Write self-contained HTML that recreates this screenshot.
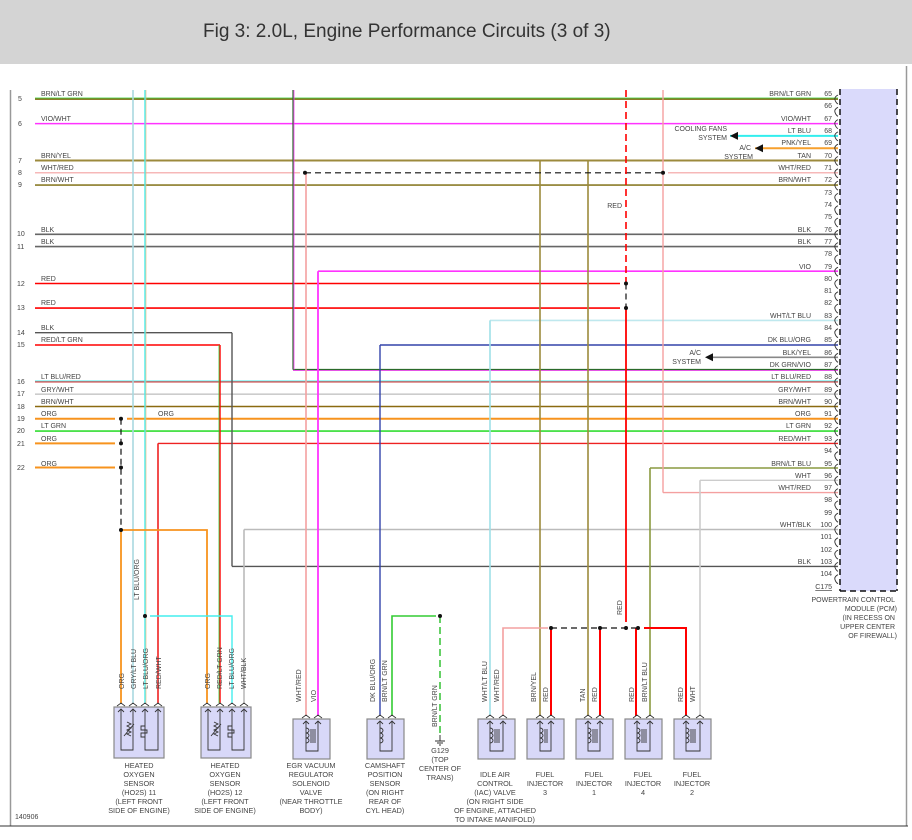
<!DOCTYPE html>
<html><head><meta charset="utf-8"><style>
html,body{margin:0;padding:0;background:#fff;width:912px;height:840px;overflow:hidden}
svg{display:block}
text{font-family:"Liberation Sans",sans-serif;font-size:7px;fill:#444}
.t{font-size:19px;fill:#333}
.c{text-anchor:middle;font-size:7.3px}
.r{text-anchor:end}
</style></head><body>
<svg width="912" height="840" viewBox="0 0 912 840" xmlns="http://www.w3.org/2000/svg">
<rect x="0" y="0" width="912" height="64" fill="#d4d4d4"/>
<text x="203" y="37" class="t">Fig 3: 2.0L, Engine Performance Circuits (3 of 3)</text>
<!-- frame -->
<line x1="10.5" y1="90" x2="10.5" y2="826" stroke="#999" stroke-width="1.5"/>
<line x1="906.5" y1="66" x2="906.5" y2="826" stroke="#999" stroke-width="1.5"/>
<line x1="0" y1="826" x2="908" y2="826" stroke="#333" stroke-width="1"/>
<text x="15" y="819" style="font-size:7px">140906</text>
<!-- PCM -->
<rect x="840" y="89" width="57" height="502" fill="#dadafb"/>
<g stroke="#111" stroke-width="1.5" stroke-dasharray="6 4" fill="none">
<line x1="840" y1="89" x2="840" y2="591"/><line x1="897" y1="89" x2="897" y2="591"/><line x1="840" y1="591" x2="897" y2="591"/>
</g>
<g fill="none" stroke-width="1.2">
<!-- horizontal wires -->
<line x1="35" y1="99" x2="838" y2="99" stroke="#8b7d2a" stroke-width="2"/><line x1="35" y1="98" x2="838" y2="98" stroke="#3c3" stroke-width="0.8"/>
<line x1="35" y1="123.6" x2="838" y2="123.6" stroke="#f3f" stroke-width="1.5"/>
<line x1="730" y1="135.9" x2="838" y2="135.9" stroke="#3ee" stroke-width="2"/>
<line x1="755" y1="148.2" x2="838" y2="148.2" stroke="#f7a02e" stroke-width="2"/>
<line x1="35" y1="160.5" x2="838" y2="160.5" stroke="#9c8a3c" stroke-width="2"/>
<line x1="35" y1="172.8" x2="300" y2="172.8" stroke="#f4a0a0" stroke-width="1.2"/>
<line x1="668" y1="172.8" x2="838" y2="172.8" stroke="#f4a0a0" stroke-width="1.2"/>
<line x1="35" y1="185.1" x2="838" y2="185.1" stroke="#8b7d2a" stroke-width="1.6"/>
<line x1="35" y1="234.3" x2="838" y2="234.3" stroke="#666" stroke-width="1.6"/>
<line x1="35" y1="246.6" x2="838" y2="246.6" stroke="#666" stroke-width="1.6"/>
<line x1="318" y1="271.2" x2="838" y2="271.2" stroke="#f3f" stroke-width="1.6"/>
<line x1="35" y1="283.5" x2="620" y2="283.5" stroke="#f00" stroke-width="1.6"/>
<line x1="35" y1="308.1" x2="620" y2="308.1" stroke="#f00" stroke-width="1.6"/>
<line x1="490" y1="320.4" x2="838" y2="320.4" stroke="#bfe8ee" stroke-width="1.6"/>
<line x1="35" y1="332.7" x2="232" y2="332.7" stroke="#555" stroke-width="1.4"/>
<line x1="35" y1="345" x2="220" y2="345" stroke="#f00" stroke-width="1.4"/>
<line x1="380" y1="345" x2="838" y2="345" stroke="#3344aa" stroke-width="1.4"/>
<line x1="708" y1="357.3" x2="838" y2="357.3" stroke="#888" stroke-width="1.6"/>
<line x1="293" y1="369.6" x2="838" y2="369.6" stroke="#2a6a2a" stroke-width="1.4"/><line x1="293" y1="370.6" x2="838" y2="370.6" stroke="#f3f" stroke-width="0.8"/>
<line x1="35" y1="381.9" x2="838" y2="381.9" stroke="#c33" stroke-width="1.2"/><line x1="35" y1="380.9" x2="838" y2="380.9" stroke="#4ee" stroke-width="0.8"/>
<line x1="35" y1="394.2" x2="838" y2="394.2" stroke="#ccc" stroke-width="1.6"/>
<line x1="35" y1="406.5" x2="838" y2="406.5" stroke="#8b6a10" stroke-width="1.4"/>
<line x1="35" y1="418.8" x2="115" y2="418.8" stroke="#f7931e" stroke-width="2"/>
<line x1="127" y1="418.8" x2="838" y2="418.8" stroke="#f7931e" stroke-width="2"/>
<line x1="35" y1="431.1" x2="838" y2="431.1" stroke="#3d3" stroke-width="1.6"/>
<line x1="35" y1="443.4" x2="115" y2="443.4" stroke="#f7931e" stroke-width="2"/>
<line x1="158" y1="443.4" x2="838" y2="443.4" stroke="#e22" stroke-width="1.4"/>
<line x1="35" y1="467.5" x2="115" y2="467.5" stroke="#f7931e" stroke-width="2"/>
<line x1="650" y1="468" x2="838" y2="468" stroke="#8a9a40" stroke-width="1.4"/>
<line x1="700" y1="480.3" x2="838" y2="480.3" stroke="#ccc" stroke-width="1.4"/>
<line x1="663" y1="492.6" x2="838" y2="492.6" stroke="#f4a0a0" stroke-width="1.4"/>
<line x1="244" y1="529.5" x2="838" y2="529.5" stroke="#bbb" stroke-width="1.4"/>
<line x1="232" y1="566.4" x2="838" y2="566.4" stroke="#555" stroke-width="1.4"/>
<!-- verticals -->
<line x1="133" y1="90" x2="133" y2="703" stroke="#a8d8e0" stroke-width="1.6"/>
<line x1="145" y1="90" x2="145" y2="703" stroke="#4ee" stroke-width="1.4"/><line x1="146" y1="90" x2="146" y2="703" stroke="#f7b070" stroke-width="0.6"/>
<line x1="293" y1="90" x2="293" y2="369.6" stroke="#2a6a2a" stroke-width="1.2"/><line x1="294" y1="90" x2="294" y2="369.6" stroke="#f3f" stroke-width="0.8"/>
<line x1="306" y1="172.8" x2="306" y2="716" stroke="#f4a0a0" stroke-width="1.6"/>
<line x1="318" y1="271.2" x2="318" y2="716" stroke="#f3f" stroke-width="1.8"/>
<line x1="663" y1="90" x2="663" y2="492.6" stroke="#f4a0a0" stroke-width="1.4"/>
<line x1="540" y1="160.5" x2="540" y2="716" stroke="#9c8a3c" stroke-width="1.6"/>
<line x1="588" y1="160.5" x2="588" y2="716" stroke="#9c8a3c" stroke-width="1.6"/>
<line x1="490" y1="320.4" x2="490" y2="716" stroke="#9fe0e8" stroke-width="1.6"/>
<line x1="380" y1="345" x2="380" y2="716" stroke="#3344aa" stroke-width="1.4"/>
<line x1="232" y1="332.7" x2="232" y2="566.4" stroke="#555" stroke-width="1.4"/>
<line x1="220" y1="345" x2="220" y2="703" stroke="#f00" stroke-width="1.4"/><line x1="219" y1="345" x2="219" y2="703" stroke="#3c3" stroke-width="0.8"/>
<line x1="158" y1="443.4" x2="158" y2="703" stroke="#e22" stroke-width="1.6"/>
<line x1="244" y1="529.5" x2="244" y2="703" stroke="#bbb" stroke-width="1.6"/>
<line x1="650" y1="468" x2="650" y2="716" stroke="#8a9a40" stroke-width="1.6"/>
<line x1="700" y1="480.3" x2="700" y2="716" stroke="#ccc" stroke-width="1.6"/>
<polyline points="121,530 207,530 207,703" stroke="#f7931e" stroke-width="1.8"/>
<line x1="121" y1="530" x2="121" y2="703" stroke="#f7931e" stroke-width="1.8"/>
<polyline points="150,616 232,616 232,703" stroke="#4ee" stroke-width="1.4"/>
<polyline points="436,616 392,616 392,716" stroke="#3c3" stroke-width="1.6"/>
<polyline points="548,628 503,628 503,716" stroke="#f4a0a0" stroke-width="1.6"/>
<line x1="551" y1="628" x2="551" y2="716" stroke="#f00" stroke-width="2"/>
<line x1="600" y1="628" x2="600" y2="716" stroke="#f00" stroke-width="2"/>
<line x1="636" y1="628" x2="636" y2="716" stroke="#f00" stroke-width="2"/>
<polyline points="644,628 686,628 686,716" stroke="#f00" stroke-width="2"/>
<line x1="626" y1="308" x2="626" y2="622" stroke="#f00" stroke-width="1.8"/>
</g>
<!-- dashed -->
<g fill="none" stroke="#111" stroke-width="1.2" stroke-dasharray="6 4">
<line x1="121" y1="418.8" x2="121" y2="530"/>
<line x1="305" y1="172.8" x2="663" y2="172.8"/>
<line x1="626" y1="283.5" x2="626" y2="308"/>
<line x1="551" y1="628" x2="636" y2="628"/>
</g>
<line x1="626" y1="90" x2="626" y2="283" stroke="#f00" stroke-width="1.6" stroke-dasharray="7 4"/>
<line x1="440" y1="616" x2="440" y2="735" stroke="#5c5" stroke-width="1.8" stroke-dasharray="7 4"/>
<g fill="#111">
<circle cx="121" cy="418.8" r="2"/><circle cx="121" cy="443.4" r="2"/><circle cx="121" cy="467.5" r="2"/><circle cx="121" cy="530" r="2"/>
<circle cx="145" cy="616" r="2"/><circle cx="440" cy="616" r="2"/>
<circle cx="305" cy="172.8" r="2"/><circle cx="663" cy="172.8" r="2"/>
<circle cx="626" cy="283.5" r="2"/><circle cx="626" cy="308" r="2"/>
<circle cx="551" cy="628" r="2"/><circle cx="600" cy="628" r="2"/><circle cx="626" cy="628" r="2"/><circle cx="638" cy="628" r="2"/>
<path d="M730 135.9 l8 -4 v8z"/><path d="M755 148.2 l8 -4 v8z"/><path d="M705 357.3 l8 -4 v8z"/>
</g>
<!-- ground -->
<g stroke="#333" stroke-width="1"><line x1="440" y1="735" x2="440" y2="741"/><line x1="435" y1="741" x2="445" y2="741"/><line x1="437" y1="743" x2="443" y2="743"/><line x1="439" y1="745" x2="441" y2="745"/></g>
<!-- pin connectors -->
<g fill="none" stroke="#333" stroke-width="0.9" id="pins">
<path d="M838 95 q-4 2 -3 5 q1 3 3 4 M838 107.3 q-4 2 -3 5 q1 3 3 4 M838 119.6 q-4 2 -3 5 q1 3 3 4 M838 131.9 q-4 2 -3 5 q1 3 3 4 M838 144.2 q-4 2 -3 5 q1 3 3 4 M838 156.5 q-4 2 -3 5 q1 3 3 4 M838 168.8 q-4 2 -3 5 q1 3 3 4 M838 181.1 q-4 2 -3 5 q1 3 3 4 M838 193.4 q-4 2 -3 5 q1 3 3 4 M838 205.7 q-4 2 -3 5 q1 3 3 4 M838 218 q-4 2 -3 5 q1 3 3 4 M838 230.3 q-4 2 -3 5 q1 3 3 4 M838 242.6 q-4 2 -3 5 q1 3 3 4 M838 254.9 q-4 2 -3 5 q1 3 3 4 M838 267.2 q-4 2 -3 5 q1 3 3 4 M838 279.5 q-4 2 -3 5 q1 3 3 4 M838 291.8 q-4 2 -3 5 q1 3 3 4 M838 304.1 q-4 2 -3 5 q1 3 3 4 M838 316.4 q-4 2 -3 5 q1 3 3 4 M838 328.7 q-4 2 -3 5 q1 3 3 4 M838 341 q-4 2 -3 5 q1 3 3 4 M838 353.3 q-4 2 -3 5 q1 3 3 4 M838 365.6 q-4 2 -3 5 q1 3 3 4 M838 377.9 q-4 2 -3 5 q1 3 3 4 M838 390.2 q-4 2 -3 5 q1 3 3 4 M838 402.5 q-4 2 -3 5 q1 3 3 4 M838 414.8 q-4 2 -3 5 q1 3 3 4 M838 427.1 q-4 2 -3 5 q1 3 3 4 M838 439.4 q-4 2 -3 5 q1 3 3 4 M838 451.7 q-4 2 -3 5 q1 3 3 4 M838 464 q-4 2 -3 5 q1 3 3 4 M838 476.3 q-4 2 -3 5 q1 3 3 4 M838 488.6 q-4 2 -3 5 q1 3 3 4 M838 500.9 q-4 2 -3 5 q1 3 3 4 M838 513.2 q-4 2 -3 5 q1 3 3 4 M838 525.5 q-4 2 -3 5 q1 3 3 4 M838 537.8 q-4 2 -3 5 q1 3 3 4 M838 550.1 q-4 2 -3 5 q1 3 3 4 M838 562.4 q-4 2 -3 5 q1 3 3 4 M838 574.7 q-4 2 -3 5 q1 3 3 4"/>
</g>
<!-- left numbers and labels -->
<g>
<text x="18" y="101">5</text><text x="18" y="126">6</text><text x="18" y="163">7</text><text x="18" y="175">8</text><text x="18" y="187">9</text>
<text x="17" y="236">10</text><text x="17" y="249">11</text><text x="17" y="286">12</text><text x="17" y="310">13</text><text x="17" y="335">14</text><text x="17" y="347">15</text>
<text x="17" y="384">16</text><text x="17" y="396">17</text><text x="17" y="409">18</text><text x="17" y="421">19</text><text x="17" y="433">20</text><text x="17" y="446">21</text><text x="17" y="470">22</text>
<text x="41" y="96">BRN/LT GRN</text><text x="41" y="121">VIO/WHT</text><text x="41" y="158">BRN/YEL</text><text x="41" y="170">WHT/RED</text><text x="41" y="182">BRN/WHT</text>
<text x="41" y="232">BLK</text><text x="41" y="244">BLK</text><text x="41" y="281">RED</text><text x="41" y="305">RED</text><text x="41" y="330">BLK</text><text x="41" y="342">RED/LT GRN</text>
<text x="41" y="379">LT BLU/RED</text><text x="41" y="392">GRY/WHT</text><text x="41" y="404">BRN/WHT</text><text x="41" y="416">ORG</text><text x="158" y="416">ORG</text><text x="41" y="428">LT GRN</text><text x="41" y="441">ORG</text><text x="41" y="466">ORG</text>
</g>
<!-- right labels -->
<g class="r">
<text class="r" x="811" y="96">BRN/LT GRN</text><text class="r" x="811" y="121">VIO/WHT</text><text class="r" x="811" y="133">LT BLU</text><text class="r" x="811" y="145">PNK/YEL</text><text class="r" x="811" y="158">TAN</text><text class="r" x="811" y="170">WHT/RED</text><text class="r" x="811" y="182">BRN/WHT</text>
<text class="r" x="811" y="232">BLK</text><text class="r" x="811" y="244">BLK</text><text class="r" x="811" y="269">VIO</text><text class="r" x="811" y="318">WHT/LT BLU</text><text class="r" x="811" y="342">DK BLU/ORG</text><text class="r" x="811" y="355">BLK/YEL</text><text class="r" x="811" y="367">DK GRN/VIO</text><text class="r" x="811" y="379">LT BLU/RED</text><text class="r" x="811" y="392">GRY/WHT</text><text class="r" x="811" y="404">BRN/WHT</text><text class="r" x="811" y="416">ORG</text><text class="r" x="811" y="428">LT GRN</text><text class="r" x="811" y="441">RED/WHT</text><text class="r" x="811" y="466">BRN/LT BLU</text><text class="r" x="811" y="478">WHT</text><text class="r" x="811" y="490">WHT/RED</text><text class="r" x="811" y="527">WHT/BLK</text><text class="r" x="811" y="564">BLK</text>
<text class="r" x="832" y="96">65</text><text class="r" x="832" y="108">66</text><text class="r" x="832" y="121">67</text><text class="r" x="832" y="133">68</text><text class="r" x="832" y="145">69</text><text class="r" x="832" y="158">70</text><text class="r" x="832" y="170">71</text><text class="r" x="832" y="182">72</text><text class="r" x="832" y="195">73</text><text class="r" x="832" y="207">74</text><text class="r" x="832" y="219">75</text><text class="r" x="832" y="232">76</text><text class="r" x="832" y="244">77</text><text class="r" x="832" y="256">78</text><text class="r" x="832" y="269">79</text><text class="r" x="832" y="281">80</text><text class="r" x="832" y="293">81</text><text class="r" x="832" y="305">82</text><text class="r" x="832" y="318">83</text><text class="r" x="832" y="330">84</text><text class="r" x="832" y="342">85</text><text class="r" x="832" y="355">86</text><text class="r" x="832" y="367">87</text><text class="r" x="832" y="379">88</text><text class="r" x="832" y="392">89</text><text class="r" x="832" y="404">90</text><text class="r" x="832" y="416">91</text><text class="r" x="832" y="428">92</text><text class="r" x="832" y="441">93</text><text class="r" x="832" y="453">94</text><text class="r" x="832" y="466">95</text><text class="r" x="832" y="478">96</text><text class="r" x="832" y="490">97</text><text class="r" x="832" y="502">98</text><text class="r" x="832" y="515">99</text><text class="r" x="832" y="527">100</text><text class="r" x="832" y="539">101</text><text class="r" x="832" y="552">102</text><text class="r" x="832" y="564">103</text><text class="r" x="832" y="576">104</text>
<text class="r" x="832" y="589" style="text-decoration:underline">C175</text>
<text class="r" x="727" y="131">COOLING FANS</text><text class="r" x="727" y="140">SYSTEM</text>
<text class="r" x="751" y="150">A/C</text><text class="r" x="753" y="159">SYSTEM</text>
<text class="r" x="701" y="355">A/C</text><text class="r" x="701" y="364">SYSTEM</text>
<text class="r" x="622" y="208">RED</text>
<text class="r" x="895" y="602">POWERTRAIN CONTROL</text><text class="r" x="897" y="611">MODULE (PCM)</text><text class="r" x="895" y="620">(IN RECESS ON</text><text class="r" x="895" y="629">UPPER CENTER</text><text class="r" x="897" y="638">OF FIREWALL)</text>
</g>
<!-- rotated labels -->
<g>
<text transform="translate(124,689) rotate(-90)">ORG</text>
<text transform="translate(136,689) rotate(-90)">GRY/LT BLU</text>
<text transform="translate(148,689) rotate(-90)">LT BLU/ORG</text>
<text transform="translate(161,689) rotate(-90)">RED/WHT</text>
<text transform="translate(139,600) rotate(-90)">LT BLU/ORG</text>
<text transform="translate(210,689) rotate(-90)">ORG</text>
<text transform="translate(222,689) rotate(-90)">RED/LT GRN</text>
<text transform="translate(234,689) rotate(-90)">LT BLU/ORG</text>
<text transform="translate(246,689) rotate(-90)">WHT/BLK</text>
<text transform="translate(301,702) rotate(-90)">WHT/RED</text>
<text transform="translate(316,702) rotate(-90)">VIO</text>
<text transform="translate(375,702) rotate(-90)">DK BLU/ORG</text>
<text transform="translate(387,702) rotate(-90)">BRN/LT GRN</text>
<text transform="translate(437,727) rotate(-90)">BRN/LT GRN</text>
<text transform="translate(487,702) rotate(-90)">WHT/LT BLU</text>
<text transform="translate(499,702) rotate(-90)">WHT/RED</text>
<text transform="translate(536,702) rotate(-90)">BRN/YEL</text>
<text transform="translate(548,702) rotate(-90)">RED</text>
<text transform="translate(585,702) rotate(-90)">TAN</text>
<text transform="translate(597,702) rotate(-90)">RED</text>
<text transform="translate(634,702) rotate(-90)">RED</text>
<text transform="translate(647,702) rotate(-90)">BRN/LT BLU</text>
<text transform="translate(683,702) rotate(-90)">RED</text>
<text transform="translate(695,702) rotate(-90)">WHT</text>
<text transform="translate(622,615) rotate(-90)">RED</text>
</g>
<!-- components -->
<g fill="#d8d8f8" stroke="#888" stroke-width="1.2">
<rect x="114" y="707" width="50" height="51"/><rect x="201" y="707" width="50" height="51"/>
<rect x="293" y="719" width="37" height="40"/><rect x="367" y="719" width="37" height="40"/>
<rect x="478" y="719" width="37" height="40"/><rect x="527" y="719" width="37" height="40"/><rect x="576" y="719" width="37" height="40"/><rect x="625" y="719" width="37" height="40"/><rect x="674" y="719" width="37" height="40"/>
</g>
<g fill="none" stroke="#333" stroke-width="0.9">
<!-- caret pins -->
<path d="M117 706 l4 -3 l4 3 M129 706 l4 -3 l4 3 M141 706 l4 -3 l4 3 M154 706 l4 -3 l4 3"/>
<path d="M203 706 l4 -3 l4 3 M216 706 l4 -3 l4 3 M228 706 l4 -3 l4 3 M240 706 l4 -3 l4 3"/>
<path d="M302 718 l4 -3 l4 3 M314 718 l4 -3 l4 3 M376 718 l4 -3 l4 3 M388 718 l4 -3 l4 3 M486 718 l4 -3 l4 3 M499 718 l4 -3 l4 3 M536 718 l4 -3 l4 3 M547 718 l4 -3 l4 3 M584 718 l4 -3 l4 3 M596 718 l4 -3 l4 3 M633 718 l4 -3 l4 3 M646 718 l4 -3 l4 3 M682 718 l4 -3 l4 3 M696 718 l4 -3 l4 3"/>
<!-- HO2S internals -->
<path d="M121 709 v41 h12 v-41 M145 709 v41 h13 v-41 M118 712 l3 -3 l3 3 M130 712 l3 -3 l3 3 M142 712 l3 -3 l3 3 M155 712 l3 -3 l3 3"/>
<path d="M127 722 l4 2 l-4 2 l4 2 l-4 2 l4 2 l-4 2 l4 2 M124 736 l10 -12 M145 726 h-4 v4 h6 v3 h-6 v4 h4"/>
<path d="M208 709 v41 h12 v-41 M232 709 v41 h12 v-41 M205 712 l3 -3 l3 3 M217 712 l3 -3 l3 3 M229 712 l3 -3 l3 3 M241 712 l3 -3 l3 3"/>
<path d="M214 722 l4 2 l-4 2 l4 2 l-4 2 l4 2 l-4 2 l4 2 M211 736 l10 -12 M232 726 h-4 v4 h6 v3 h-6 v4 h4"/>
<!-- solenoid coils -->
<path d="M306 721 v30 h12 v-30 M303 724 l3 -3 l3 3 M315 724 l3 -3 l3 3 M306 728 a3 2.5 0 0 1 0 5 a3 2.5 0 0 1 0 5 a3 2.5 0 0 1 0 5 M311 729 v14 M313 729 v14 M315 729 v14"/>
<path d="M380 721 v30 h12 v-30 M377 724 l3 -3 l3 3 M389 724 l3 -3 l3 3 M380 728 a3 2.5 0 0 1 0 5 a3 2.5 0 0 1 0 5 a3 2.5 0 0 1 0 5"/>
<path d="M490 721 v30 h13 v-30 M487 724 l3 -3 l3 3 M500 724 l3 -3 l3 3 M490 728 a3 2.5 0 0 1 0 5 a3 2.5 0 0 1 0 5 a3 2.5 0 0 1 0 5 M495 729 v14 M497 729 v14 M499 729 v14"/>
<path d="M540 721 v30 h11 v-30 M537 724 l3 -3 l3 3 M548 724 l3 -3 l3 3 M540 728 a3 2.5 0 0 1 0 5 a3 2.5 0 0 1 0 5 a3 2.5 0 0 1 0 5 M545 729 v14 M547 729 v14"/>
<path d="M588 721 v30 h12 v-30 M585 724 l3 -3 l3 3 M597 724 l3 -3 l3 3 M588 728 a3 2.5 0 0 1 0 5 a3 2.5 0 0 1 0 5 a3 2.5 0 0 1 0 5 M593 729 v14 M595 729 v14 M597 729 v14"/>
<path d="M637 721 v30 h13 v-30 M634 724 l3 -3 l3 3 M647 724 l3 -3 l3 3 M637 728 a3 2.5 0 0 1 0 5 a3 2.5 0 0 1 0 5 a3 2.5 0 0 1 0 5 M642 729 v14 M644 729 v14 M646 729 v14"/>
<path d="M686 721 v30 h14 v-30 M683 724 l3 -3 l3 3 M697 724 l3 -3 l3 3 M686 728 a3 2.5 0 0 1 0 5 a3 2.5 0 0 1 0 5 a3 2.5 0 0 1 0 5 M691 729 v14 M693 729 v14 M695 729 v14"/>
</g>
<!-- component labels -->
<g>
<text class="c" x="139" y="768">HEATED</text><text class="c" x="139" y="777">OXYGEN</text><text class="c" x="139" y="786">SENSOR</text><text class="c" x="139" y="795">(HO2S) 11</text><text class="c" x="139" y="804">(LEFT FRONT</text><text class="c" x="139" y="813">SIDE OF ENGINE)</text>
<text class="c" x="225" y="768">HEATED</text><text class="c" x="225" y="777">OXYGEN</text><text class="c" x="225" y="786">SENSOR</text><text class="c" x="225" y="795">(HO2S) 12</text><text class="c" x="225" y="804">(LEFT FRONT</text><text class="c" x="225" y="813">SIDE OF ENGINE)</text>
<text class="c" x="311" y="768">EGR VACUUM</text><text class="c" x="311" y="777">REGULATOR</text><text class="c" x="311" y="786">SOLENOID</text><text class="c" x="311" y="795">VALVE</text><text class="c" x="311" y="804">(NEAR THROTTLE</text><text class="c" x="311" y="813">BODY)</text>
<text class="c" x="385" y="768">CAMSHAFT</text><text class="c" x="385" y="777">POSITION</text><text class="c" x="385" y="786">SENSOR</text><text class="c" x="385" y="795">(ON RIGHT</text><text class="c" x="385" y="804">REAR OF</text><text class="c" x="385" y="813">CYL HEAD)</text>
<text class="c" x="440" y="753">G129</text><text class="c" x="440" y="762">(TOP</text><text class="c" x="440" y="771">CENTER OF</text><text class="c" x="440" y="780">TRANS)</text>
<text class="c" x="495" y="777">IDLE AIR</text><text class="c" x="495" y="786">CONTROL</text><text class="c" x="495" y="795">(IAC) VALVE</text><text class="c" x="495" y="804">(ON RIGHT SIDE</text><text class="c" x="495" y="813">OF ENGINE, ATTACHED</text><text class="c" x="495" y="822">TO INTAKE MANIFOLD)</text>
<text class="c" x="545" y="777">FUEL</text><text class="c" x="545" y="786">INJECTOR</text><text class="c" x="545" y="795">3</text>
<text class="c" x="594" y="777">FUEL</text><text class="c" x="594" y="786">INJECTOR</text><text class="c" x="594" y="795">1</text>
<text class="c" x="643" y="777">FUEL</text><text class="c" x="643" y="786">INJECTOR</text><text class="c" x="643" y="795">4</text>
<text class="c" x="692" y="777">FUEL</text><text class="c" x="692" y="786">INJECTOR</text><text class="c" x="692" y="795">2</text>
</g>
</svg>
</body></html>
